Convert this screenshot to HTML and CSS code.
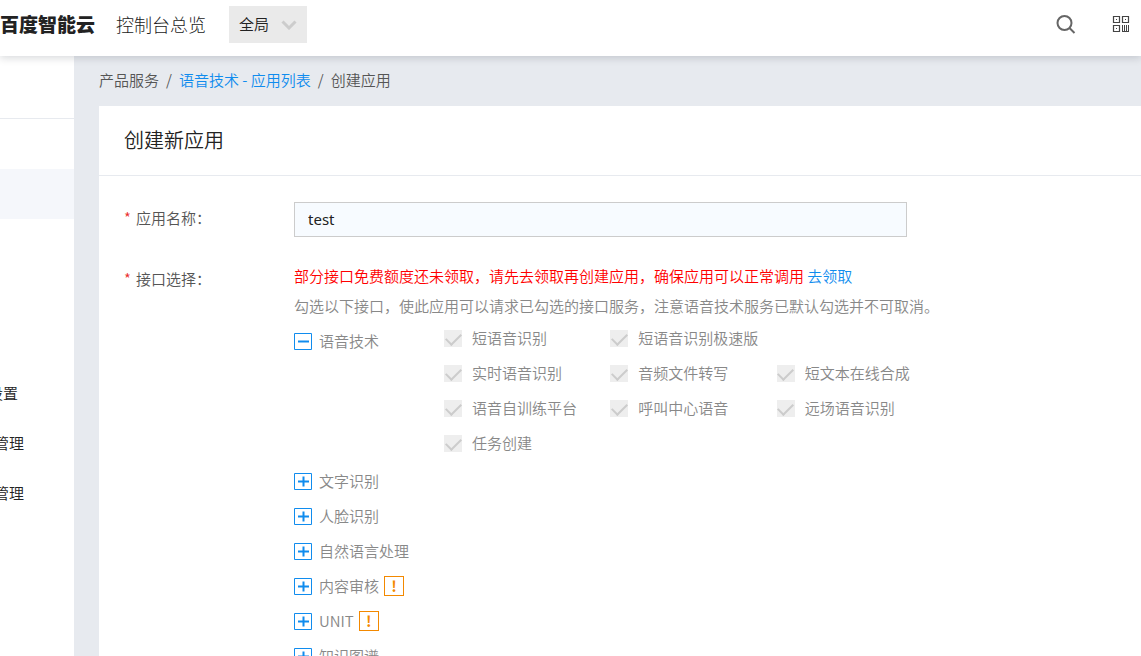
FILE: index.html
```
<!DOCTYPE html>
<html lang="zh-CN">
<head>
<meta charset="utf-8">
<title>创建应用</title>
<link rel="stylesheet" href="styles.css">
</head>
<body>
<svg class="defs" aria-hidden="true">
  <symbol id="plus" viewBox="0 0 18 17"><path d="M.5 .5h17v16H.5z" fill="none" stroke="#108cee"/><path d="M4 8.500h11M9.500 3.500v10" fill="none" stroke="#108cee" stroke-width="2"/></symbol>
  <symbol id="minus" viewBox="0 0 18 17"><path d="M.5 .5h17v16H.5z" fill="none" stroke="#108cee"/><path d="M4 8.500h11" fill="none" stroke="#108cee" stroke-width="2"/></symbol>
</svg>
<header class="topbar">
  <a class="logo" href="#">百度智能云</a>
  <a class="overview" href="#">控制台总览</a>
  <div class="region">
    <select class="region-select" aria-label="区域"><option>全局</option></select>
    <svg class="region-arrow" width="16" height="10" viewBox="0 0 16 10" aria-hidden="true"><path d="M1.500 1.500L8 8l6.500-6.500" fill="none" stroke="#ccc" stroke-width="3"/></svg>
  </div>
  <div class="tools">
    <button class="tool" type="button" aria-label="搜索">
      <svg width="20" height="20" viewBox="0 0 20 20" fill="none" stroke="#666" stroke-width="2"><circle cx="8.500" cy="8" r="7"/><path d="M13.500 13l5 5"/></svg>
    </button>
    <button class="tool" type="button" aria-label="二维码">
      <svg width="18" height="18" viewBox="0 0 18 18" fill="none" stroke="#444"><path d="M1.500 .5h6v6h-6zM10.500 .5h6v6h-6zM1.500 9.500h6v6h-6z" stroke-width="1.200"/><path d="M4 3.500h1M13 3.500h1M4 12.500h1"/><path d="M10.500 9v7M12.500 9v6.500M14.500 9v6.500M16.500 9v7M10 15.500h7"/></svg>
    </button>
  </div>
</header>
<div class="layout">
  <nav class="sidebar">
    <div class="side-head"></div>
    <a class="side-item side-active" href="#" aria-label="应用列表"></a>
    <div class="side-space"></div>
    <a class="side-item side-short" href="#">设置</a>
    <a class="side-item" href="#">管理</a>
    <a class="side-item" href="#">管理</a>
  </nav>
  <main class="main">
    <nav class="crumbs">
      <span>产品服务</span><span>/</span><a href="#">语音技术 - 应用列表</a><span>/</span><span>创建应用</span>
    </nav>
    <section class="card">
      <h1 class="title">创建新应用</h1>
      <form class="form">
        <div class="row name-row">
          <label class="label name-label" for="name"><span class="star">*</span>应用名称：</label>
          <input class="name" id="name" type="text" value="test">
        </div>
        <div class="row">
          <div class="label"><span class="star">*</span>接口选择：</div>
          <div class="apis">
            <p class="line warn">部分接口免费额度还未领取，请先去领取再创建应用，确保应用可以正常调用 <a href="#">去领取</a></p>
            <p class="line">勾选以下接口，使此应用可以请求已勾选的接口服务，注意语音技术服务已默认勾选并不可取消。</p>
            <div class="open-group">
              <button class="group" type="button" aria-expanded="true"><svg class="toggle"><use href="#minus"/></svg>语音技术</button>
              <div class="options">
                <label class="option"><input type="checkbox" checked disabled>短语音识别</label>
                <label class="option"><input type="checkbox" checked disabled>短语音识别极速版</label>
                <label class="option first"><input type="checkbox" checked disabled>实时语音识别</label>
                <label class="option"><input type="checkbox" checked disabled>音频文件转写</label>
                <label class="option"><input type="checkbox" checked disabled>短文本在线合成</label>
                <label class="option"><input type="checkbox" checked disabled>语音自训练平台</label>
                <label class="option"><input type="checkbox" checked disabled>呼叫中心语音</label>
                <label class="option"><input type="checkbox" checked disabled>远场语音识别</label>
                <label class="option"><input type="checkbox" checked disabled>任务创建</label>
              </div>
            </div>
            <button class="group" type="button"><svg class="toggle"><use href="#plus"/></svg>文字识别</button>
            <button class="group" type="button"><svg class="toggle"><use href="#plus"/></svg>人脸识别</button>
            <button class="group" type="button"><svg class="toggle"><use href="#plus"/></svg>自然语言处理</button>
            <button class="group" type="button"><svg class="toggle"><use href="#plus"/></svg>内容审核<span class="alert">!</span></button>
            <button class="group" type="button"><svg class="toggle"><use href="#plus"/></svg>UNIT<span class="alert">!</span></button>
            <button class="group" type="button"><svg class="toggle"><use href="#plus"/></svg>知识图谱</button>
          </div>
        </div>
      </form>
    </section>
  </main>
</div>
</body>
</html>
```
FILE: styles.css
```
* { box-sizing: border-box; }
body {
  margin: 0;
  height: 100vh;
  overflow: hidden;
  display: flex;
  flex-direction: column;
  font: 350 15px/20px "Noto Sans CJK SC", sans-serif;
  color: #444;
  background: #e7eaef;
}
button, input, select { font: inherit; color: inherit; }
a { color: #108cee; text-decoration: none; }
.defs { position: absolute; width: 0; height: 0; }

.topbar {
  position: relative;
  z-index: 1;
  flex: none;
  height: 56px;
  padding: 6px 11px 13px 0;
  display: flex;
  align-items: center;
  background: #fff;
  box-shadow: 0 2px 8px rgba(0, 20, 30, .16);
}
.logo { padding-bottom: 2px; font-size: 19px; font-weight: 900; color: #222; }
.overview { margin-left: 21px; padding-bottom: 2px; font-size: 18px; font-weight: 300; color: #222; }
.region { position: relative; margin-left: 23px; }
.region-select {
  display: block;
  appearance: none;
  width: 78px;
  height: 37px;
  padding: 0 10px 2px;
  border: 0;
  border-radius: 0;
  background: #eaeaea;
  color: #222;
}
.region-arrow { position: absolute; right: 10px; top: 14px; pointer-events: none; }
.tools { margin-left: auto; display: flex; align-items: center; gap: 36px; }
.tool { display: flex; padding: 0; border: 0; background: none; }

.layout { flex: 1; min-height: 0; display: flex; }
.sidebar { flex: none; width: 74px; background: #fff; }
.side-head { height: 63px; margin-bottom: 50px; border-bottom: 1px solid #e7eaef; }
.side-item {
  height: 50px;
  padding-right: 50px;
  display: flex;
  align-items: center;
  justify-content: flex-end;
  white-space: nowrap;
  color: #222;
}
.side-short { padding-right: 56px; }
.side-active { background: #f5f7fb; }
.side-space { height: 149px; }

.main { flex: 1; min-width: 0; padding-left: 25px; display: flex; flex-direction: column; }
.crumbs { flex: none; height: 50px; padding-bottom: 2px; display: flex; align-items: center; gap: 7px; color: #555; }
.card { flex: 1; min-height: 0; overflow: hidden; background: #fff; }
.title {
  margin: 0;
  padding: 19px 25px 20px;
  border-bottom: 1px solid #e7eaef;
  font-size: 20px;
  line-height: 30px;
  font-weight: 350;
  color: #222;
}
.form { padding: 26px 25px; }
.row { display: flex; align-items: flex-start; }
.name-row { margin-bottom: 24px; }
.label { flex: none; width: 170px; height: 35px; display: flex; align-items: center; color: #555; }
.name-label { padding-bottom: 4px; }
.star { width: 12px; color: #ea2e2e; }
.name {
  flex: 0 1 613px;
  min-width: 0;
  height: 35px;
  padding: 0 13px 2px;
  border: 1px solid #ccc;
  border-radius: 0;
  background: #f7fbff;
  color: #222;
  font: 15px "Noto Sans", sans-serif;
}
.apis { flex: 1; min-width: 0; color: #888; }
.line { margin: 0; line-height: 30px; white-space: nowrap; }
.warn { color: #f00; }
.open-group { display: flex; align-items: flex-start; margin-bottom: 3px; }
.open-group .group { width: 150px; margin-top: 3px; }
.group {
  display: flex;
  align-items: center;
  height: 35px;
  padding: 0 0 2px;
  border: 0;
  background: none;
  color: #888;
}
.toggle { width: 18px; height: 17px; margin: 2px 7px 0 0; }
.alert {
  width: 20px;
  height: 20px;
  margin-left: 5px;
  border: 1px solid #f38900;
  color: #f38900;
  font-weight: 700;
  line-height: 18px;
  text-align: center;
}
.options { flex: 0 1 499px; display: grid; grid-template-columns: repeat(3, 1fr); grid-auto-rows: 35px; }
.option { display: flex; align-items: center; gap: 10px; padding-bottom: 2px; white-space: nowrap; }
.first { grid-column: 1; }
.option input {
  appearance: none;
  display: grid;
  place-items: center;
  width: 18px;
  height: 17px;
  margin: 2px 0 0;
  background: #eee;
}
.option input::after {
  content: "";
  width: 7px;
  height: 13px;
  margin-bottom: 4px;
  border: solid #ccc;
  border-width: 0 2px 2px 0;
  transform: rotate(45deg);
}
```
